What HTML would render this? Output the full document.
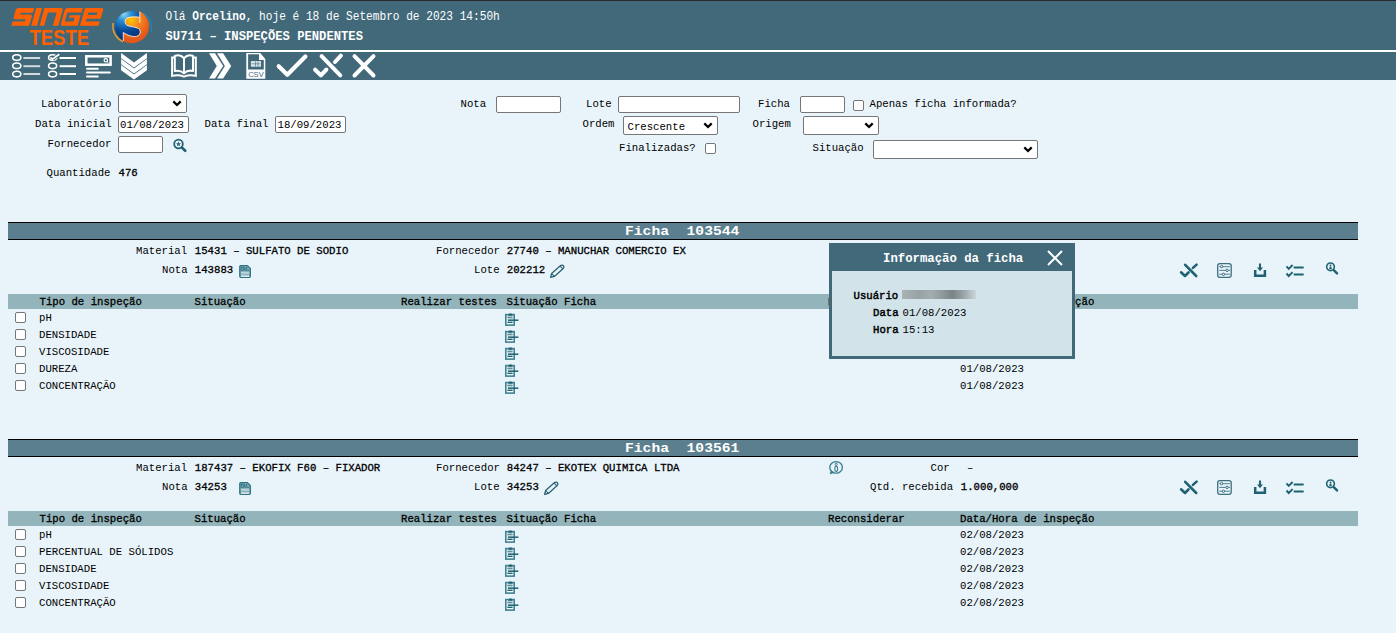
<!DOCTYPE html><html><head><meta charset="utf-8"><style>
*{margin:0;padding:0;box-sizing:border-box}
html,body{width:1396px;height:633px;overflow:hidden;background:#e8f4fa;font-family:"Liberation Mono",monospace;position:relative}
.a{position:absolute}
.t{position:absolute;line-height:20px;white-space:pre}
.inp{position:absolute;background:#fff;border:1px solid #767676;border-radius:2px}
.sel{position:absolute;background:#fff;border:1px solid #767676;border-radius:2px}
.chk{position:absolute;background:#fff;border:1px solid #767676;border-radius:2px}
</style></head><body>
<div class="a" style="left:0px;top:0px;width:1396px;height:1px;background:#2a2a30;"></div>
<div class="a" style="left:0px;top:1px;width:1396px;height:49px;background:#41697a;"></div>
<div class="a" style="left:0px;top:50px;width:1396px;height:2px;background:#ffffff;"></div>
<div class="a" style="left:0px;top:52px;width:1396px;height:28px;background:#41697a;"></div>
<svg class="a" style="left:0;top:0" width="110" height="50" viewBox="0 0 110 50"><path fill-rule="evenodd" transform="matrix(1 0 -0.28 1 7.24 0)" d="M11.3 10 Q11.3 7.9 13.5 7.9 L29.2 7.9 L29.2 12.8 L17 12.8 L17 14.6 L27.3 14.6 Q29.2 14.6 29.2 16.5 L29.2 24 Q29.2 25.86 27.3 25.86 L11.3 25.86 L11.3 21.4 L23.8 21.4 L23.8 19.25 L13.3 19.25 Q11.3 19.25 11.3 17.2 Z M31.2 7.9 L37 7.9 L37 25.86 L31.2 25.86 Z M39.5 7.9 L56 7.9 Q58.2 7.9 58.2 10.2 L58.2 25.86 L52.9 25.86 L52.9 12.6 L44.2 12.6 L44.2 25.86 L39.5 25.86 Z M62.6 7.9 L77.8 7.9 L77.8 12.4 L63.6 12.4 L63.6 21.6 L72.3 21.6 L72.3 17.8 L66.7 17.8 L66.7 15.2 L77.6 15.2 L77.6 25.86 L62.4 25.86 Q60.4 25.86 60.4 23.8 L60.4 10.1 Q60.4 7.9 62.6 7.9 Z M80 7.9 L96.4 7.9 Q98.7 7.9 98.7 10.2 L98.7 18.8 L84.5 18.8 L84.5 21.6 L98.5 21.6 L98.5 25.86 L80 25.86 Z M84.8 12.4 L84.8 15 L93.8 15 L93.8 12.4 Z" fill="#ff6100"/><text x="29.5" y="44.8" font-family="Liberation Sans" font-weight="bold" font-size="22" fill="#ff6100" textLength="59.5" lengthAdjust="spacingAndGlyphs">TESTE</text></svg>
<svg class="a" style="left:108px;top:6px" width="50" height="42" viewBox="0 0 50 42"><defs><radialGradient id="gb" gradientUnits="userSpaceOnUse" cx="16" cy="8" r="28"><stop offset="0" stop-color="#8fd4f4"/><stop offset="0.25" stop-color="#2a8fd6"/><stop offset="0.6" stop-color="#0b4a96"/><stop offset="1" stop-color="#05286a"/></radialGradient><radialGradient id="go" gradientUnits="userSpaceOnUse" cx="23" cy="14" r="20"><stop offset="0" stop-color="#ffc800"/><stop offset="0.4" stop-color="#f68a1e"/><stop offset="1" stop-color="#e4561a"/></radialGradient></defs><path d="M5 17 C4 25 8 32 15 36" fill="none" stroke="#f0a020" stroke-width="1.3"/><path d="M35.5 6.5 C41 10 44 17 43.5 26" fill="none" stroke="#1a88c8" stroke-width="1.3"/><ellipse cx="23.5" cy="20.8" rx="16.5" ry="15.8" fill="url(#gb)"/><path d="M31.8 5.3 L31.8 11.3 C27 10.6 21 10.6 18.5 12.3 C16.5 14 16.6 17.8 19 19.3 C22 20.8 27.5 20.8 30.5 22.5 C33 24 32.8 28 30 29.8 C27 31.3 21 30.5 15.3 26.5 L15.3 35.2 A16.5 15.8 0 1 0 31.8 5.3 Z" fill="url(#go)"/><path d="M31.8 5.6 L31.8 17 M31.8 11.3 C27 10.6 21 10.6 18.5 12.3 C16.5 14 16.6 17.8 19 19.3 C22 20.8 27.5 20.8 30.5 22.5 C33 24 32.8 28 30 29.8 C27 31.3 21 30.5 15.3 26.5 L15.3 35" fill="none" stroke="#fff" stroke-width="0.8"/></svg>
<div class="t" style="left:165.50px;top:7.03px;font-size:11.15px;transform:scaleY(1.2);transform-origin:0 12.97px;color:#fff;">Olá <b>Orcelino</b>, hoje é 18 de Setembro de 2023 14:50h</div>
<div class="t" style="left:165.50px;top:26.75px;font-size:12.2px;font-weight:bold;color:#fff;">SU711 – INSPEÇÕES PENDENTES</div>
<svg class="a" style="left:0px;top:48px" width="400" height="34" viewBox="0 48 400 34"><ellipse cx="16.8" cy="57.6" rx="4.05" ry="2.8" fill="none" stroke="#fff" stroke-width="1.55"/><rect x="23.4" y="57" width="16.7" height="2" fill="#d3dadd"/><ellipse cx="16.8" cy="65.8" rx="4.05" ry="2.8" fill="none" stroke="#fff" stroke-width="1.55"/><rect x="23.4" y="65.2" width="16.7" height="2" fill="#d3dadd"/><ellipse cx="16.8" cy="74.1" rx="4.05" ry="2.8" fill="none" stroke="#fff" stroke-width="1.55"/><rect x="23.4" y="73" width="16.7" height="2" fill="#d3dadd"/><ellipse cx="52.6" cy="57.6" rx="4.05" ry="2.8" fill="none" stroke="#fff" stroke-width="1.55"/><rect x="59.6" y="57" width="16.4" height="2" fill="#fff"/><ellipse cx="52.6" cy="65.8" rx="4.05" ry="2.8" fill="none" stroke="#fff" stroke-width="1.55"/><rect x="59.6" y="65.2" width="16.4" height="2" fill="#fff"/><ellipse cx="52.6" cy="74.1" rx="4.05" ry="2.8" fill="none" stroke="#fff" stroke-width="1.55"/><rect x="59.6" y="73" width="16.4" height="2" fill="#fff"/><path d="M52.6 59.2 L59.3 54.3" fill="none" stroke="#41697a" stroke-width="3.2"/><path d="M50.3 57.4 L52.5 59.2 L59.3 54.3" fill="none" stroke="#fff" stroke-width="1.7"/><rect x="86.3" y="56.3" width="24.3" height="8.4" fill="none" stroke="#fff" stroke-width="2.5"/><circle cx="105.8" cy="60.3" r="1.7" fill="none" stroke="#fff" stroke-width="1.2"/><path d="M107 61.5 L108.4 62.8" stroke="#fff" stroke-width="1"/><path d="M87 68.7 H97.8 M87 72.6 H109.8 M87 76.5 H97.8" stroke="#fff" stroke-width="2" stroke-linecap="round"/><path d="M121.1 53 L134 62.6 L146.9 53 L146.9 58.2 L134 67.6 L121.1 58.2 Z" fill="#fff"/><path d="M121.1 59 L134 68.6 L146.9 59 L146.9 64.2 L134 73.6 L121.1 64.2 Z" fill="#fff"/><path d="M121.1 65 L134 74.6 L146.9 65 L146.9 70.2 L134 79.6 L121.1 70.2 Z" fill="#fff"/><path d="M175 57.6 L172.1 57.6 L172.1 75.9 C176 75 180.5 75.2 184 76.6 C187.5 75.2 192 75 195.8 75.9 L195.8 57.6 L193 57.6" fill="none" stroke="#fff" stroke-width="2"/><path d="M174.8 71 L174.8 56 C178 54.6 181.6 55.4 184 58.2 C186.4 55.4 190 54.6 193 56 L193 71 C190 70.2 186.4 71 184 73.4 C181.6 71 178 70.2 174.8 71 Z M184 58.2 L184 73.4" fill="none" stroke="#fff" stroke-width="2" stroke-linejoin="round"/><path d="M209 53.3 L215 53.3 L223.2 65.9 L215 78.6 L209 78.6 L216.8 65.9 Z M217.1 53.3 L223.1 53.3 L231.2 65.9 L223.1 78.6 L217.1 78.6 L224.9 65.9 Z" fill="#fff"/><path d="M246.3 53 L260.2 53 L265.3 59.1 L265.3 78.8 L246.3 78.8 Z" fill="#fff"/><path d="M248.1 54.3 L259 54.3 L259 60.1 L263.8 60.1 L263.8 69.5 L248.1 69.5 Z" fill="#41697a"/><rect x="250.9" y="61.1" width="10.1" height="5.6" fill="#dfe6e9"/><path d="M251.5 63.8 H260.5 M255.5 61.5 V66.5 M258 61.5 V66.5" stroke="#41697a" stroke-width="0.6"/><text x="255.95" y="76.9" font-family="Liberation Sans" font-size="7.8" fill="#41697a" text-anchor="middle" textLength="15.6" lengthAdjust="spacingAndGlyphs">CSV</text><path d="M278.7 66.2 L287.3 74.8 L305.4 56.6" fill="none" stroke="#fff" stroke-width="4.2" stroke-linecap="round" stroke-linejoin="round"/><path d="M315.1 69.7 L320.9 75.3 L326.4 69.5 M321.6 56.1 L340.3 75.3 M340.9 55.6 L335 62" fill="none" stroke="#fff" stroke-width="4" stroke-linecap="round" stroke-linejoin="round"/><path d="M354.5 56.1 L373.5 75.5 M373.5 56.1 L354.5 75.5" fill="none" stroke="#fff" stroke-width="4" stroke-linecap="round"/></svg>
<div class="t" style="left:41.00px;top:94.16px;font-size:10.67px;color:#000;">Laboratório</div>
<div class="sel" style="left:118px;top:94px;width:69px;height:19px"><svg class="a" style="right:4.2px;top:5.0px" width="10" height="7" viewBox="0 0 10 7"><path d="M1.3 1.4 L5 5 L8.7 1.4" fill="none" stroke="#000" stroke-width="2.3"/></svg></div>
<div class="t" style="left:35.00px;top:114.16px;font-size:10.67px;color:#000;">Data inicial</div>
<div class="inp" style="left:118px;top:116px;width:71px;height:17px"></div>
<div class="t" style="left:120.00px;top:115.16px;font-size:10.67px;color:#000;color:#000">01/08/2023</div>
<div class="t" style="left:204.50px;top:114.16px;font-size:10.67px;color:#000;">Data final</div>
<div class="inp" style="left:275px;top:116px;width:71px;height:17px"></div>
<div class="t" style="left:277.50px;top:115.16px;font-size:10.67px;color:#000;">18/09/2023</div>
<div class="t" style="left:47.50px;top:134.16px;font-size:10.67px;color:#000;">Fornecedor</div>
<div class="inp" style="left:118px;top:136px;width:45px;height:17px"></div>
<svg class="a" style="left:172px;top:138px" width="16" height="16" viewBox="0 0 16 16"><circle cx="6.5" cy="6" r="4.3" fill="none" stroke="#1f6272" stroke-width="1.8"/><path d="M10 9.6 L13.2 12.8" stroke="#1f6272" stroke-width="2.7" stroke-linecap="round"/><path d="M6.5 3.6 L7.2 5.3 L9 5.3 L7.6 6.4 L8.1 8.2 L6.5 7.2 L4.9 8.2 L5.4 6.4 L4 5.3 L5.8 5.3Z" fill="#1f6272"/></svg>
<div class="t" style="left:46.50px;top:163.16px;font-size:10.67px;color:#000;">Quantidade</div>
<div class="t" style="left:118.50px;top:163.16px;font-size:10.67px;-webkit-text-stroke:0.3px #000;color:#000;">476</div>
<div class="t" style="left:460.50px;top:94.16px;font-size:10.67px;color:#000;">Nota</div>
<div class="inp" style="left:496px;top:96px;width:65px;height:17px"></div>
<div class="t" style="left:586.00px;top:94.16px;font-size:10.67px;color:#000;">Lote</div>
<div class="inp" style="left:618px;top:96px;width:122px;height:17px"></div>
<div class="t" style="left:758.00px;top:94.16px;font-size:10.67px;color:#000;">Ficha</div>
<div class="inp" style="left:800px;top:96px;width:45px;height:17px"></div>
<div class="chk" style="left:853px;top:100px;width:11px;height:11px"></div>
<div class="t" style="left:869.50px;top:94.16px;font-size:10.67px;color:#000;">Apenas ficha informada?</div>
<div class="t" style="left:582.50px;top:114.16px;font-size:10.67px;color:#000;">Ordem</div>
<div class="sel" style="left:623px;top:116px;width:95px;height:19px"><svg class="a" style="right:4.2px;top:5.0px" width="10" height="7" viewBox="0 0 10 7"><path d="M1.3 1.4 L5 5 L8.7 1.4" fill="none" stroke="#000" stroke-width="2.3"/></svg></div>
<div class="t" style="left:627.50px;top:117.16px;font-size:10.67px;color:#000;">Crescente</div>
<div class="t" style="left:752.50px;top:114.16px;font-size:10.67px;color:#000;">Origem</div>
<div class="sel" style="left:803px;top:116px;width:76px;height:19px"><svg class="a" style="right:4.2px;top:5.0px" width="10" height="7" viewBox="0 0 10 7"><path d="M1.3 1.4 L5 5 L8.7 1.4" fill="none" stroke="#000" stroke-width="2.3"/></svg></div>
<div class="t" style="left:619.00px;top:138.16px;font-size:10.67px;color:#000;">Finalizadas?</div>
<div class="chk" style="left:705px;top:143px;width:11px;height:11px"></div>
<div class="t" style="left:812.50px;top:138.16px;font-size:10.67px;color:#000;">Situação</div>
<div class="sel" style="left:873px;top:140px;width:165px;height:19px"><svg class="a" style="right:4.2px;top:5.0px" width="10" height="7" viewBox="0 0 10 7"><path d="M1.3 1.4 L5 5 L8.7 1.4" fill="none" stroke="#000" stroke-width="2.3"/></svg></div>
<div class="a" style="left:8px;top:222px;width:1350px;height:18px;background:#5b7f8e;border-top:1px solid #000;border-bottom:1px solid #000"></div>
<div class="t" style="left:625.00px;top:221.09px;font-size:14.67px;font-weight:bold;transform:scaleY(0.84);transform-origin:0 13.91px;color:#fff;">Ficha  103544</div>
<div class="t" style="left:136.00px;top:241.16px;font-size:10.67px;color:#000;">Material</div>
<div class="t" style="left:194.80px;top:241.16px;font-size:10.67px;-webkit-text-stroke:0.3px #000;color:#000;">15431 – SULFATO DE SODIO</div>
<div class="t" style="left:436.00px;top:241.16px;font-size:10.67px;color:#000;">Fornecedor</div>
<div class="t" style="left:506.80px;top:241.16px;font-size:10.67px;-webkit-text-stroke:0.3px #000;color:#000;">27740 – MANUCHAR COMERCIO EX</div>
<div class="t" style="left:162.00px;top:260.16px;font-size:10.67px;color:#000;">Nota</div>
<div class="t" style="left:194.80px;top:260.16px;font-size:10.67px;-webkit-text-stroke:0.3px #000;color:#000;">143883</div>
<svg class="a" style="left:236px;top:262px" width="18" height="18" viewBox="236 262 18 18"><path d="M239.8 266.5 Q239.8 265.6 240.8 265.6 L247.3 265.6 L250.3 268.5 L250.3 276.3 Q250.3 277.3 249.3 277.3 L240.8 277.3 Q239.8 277.3 239.8 276.3 Z" fill="#8db3bd" stroke="#2d7081" stroke-width="1.3"/><rect x="241.2" y="267.2" width="2.1" height="3.1" fill="none" stroke="#2d6f80" stroke-width="0.9"/><path d="M244.7 267 V270.2 H249" fill="none" stroke="#2d6f80" stroke-width="1"/><rect x="246" y="267" width="1.2" height="2.2" fill="#2d6f80"/><rect x="241" y="272" width="8.2" height="1.7" fill="#bcd5db"/><rect x="241" y="275.6" width="8.2" height="1.2" fill="#f4fafb"/></svg>
<div class="t" style="left:474.00px;top:260.16px;font-size:10.67px;color:#000;">Lote</div>
<div class="t" style="left:506.80px;top:260.16px;font-size:10.67px;-webkit-text-stroke:0.3px #000;color:#000;">202212</div>
<svg class="a" style="left:546.0px;top:262px" width="22" height="18" viewBox="546 262 22 18"><path d="M550.6 277.4 L551.6 273.6 L560.6 265.6 Q562.3 264.5 563.5 265.8 Q564.5 267.2 563.2 268.6 L554.4 276.4 Z" fill="none" stroke="#2a6373" stroke-width="1.3" stroke-linejoin="round"/><path d="M551.6 273.6 L554.4 276.4 M560.2 266.2 L562.8 268.8" stroke="#2a6373" stroke-width="1.1"/></svg>
<div class="t" style="left:930.50px;top:241.16px;font-size:10.67px;color:#000;">Cor</div>
<div class="t" style="left:967.00px;top:241.16px;font-size:10.67px;color:#000;">–</div>
<div class="t" style="left:870.00px;top:260.16px;font-size:10.67px;color:#000;">Qtd. recebida</div>
<div class="t" style="left:960.80px;top:260.16px;font-size:10.67px;-webkit-text-stroke:0.3px #000;color:#000;">1.000,000</div>
<svg class="a" style="left:1170px;top:255px" width="180" height="28" viewBox="1170 255 180 28"><path d="M1181.05 272.3 L1185 276 L1188.5 272.5 M1185.2 264.8 L1196.2 276 M1196.6 264.6 L1192.9 267.9" fill="none" stroke="#1f6272" stroke-width="2.6" stroke-linecap="round" stroke-linejoin="round"/><rect x="1217.7" y="263.6" width="13.5" height="13.7" rx="2.2" fill="none" stroke="#3d6f7f" stroke-width="1.3"/><path d="M1219.3 266.7 H1229.9 M1219.3 270.4 H1229.9 M1219.3 274.2 H1229.9" stroke="#3d6f7f" stroke-width="0.9"/><circle cx="1221.6" cy="266.6" r="1.2" fill="#e8f4fa" stroke="#3d6f7f" stroke-width="1"/><circle cx="1227.1" cy="270.4" r="1.2" fill="#e8f4fa" stroke="#3d6f7f" stroke-width="1"/><circle cx="1223.4" cy="274.3" r="1.2" fill="#e8f4fa" stroke="#3d6f7f" stroke-width="1"/><path d="M1255.2 270 V275.8 H1264.9 V270" fill="none" stroke="#1f6272" stroke-width="2.5"/><path d="M1260 263.5 V268.5" stroke="#1f6272" stroke-width="2.1"/><path d="M1257 267.6 L1263 267.6 L1260 271.2 Z" fill="#1f6272"/><path d="M1286.5 266.4 L1288.7 268.9 L1292.6 265 M1286.5 273.5 L1288.7 276 L1292.6 272.1" fill="none" stroke="#1f6272" stroke-width="1.9"/><path d="M1293.7 267.5 H1303.7 M1293.7 274.6 H1303.7" stroke="#1f6272" stroke-width="2"/><circle cx="1330.5" cy="266.8" r="3.85" fill="none" stroke="#1f6272" stroke-width="1.6"/><path d="M1334 270.4 L1337 273.3" stroke="#1f6272" stroke-width="2.5" stroke-linecap="round"/><circle cx="1330.5" cy="265.5" r="0.95" fill="#1f6272"/><path d="M1329.1 269 L1329.7 266.7 H1331.3 L1331.9 269 Z" fill="#1f6272"/></svg>
<div class="a" style="left:8px;top:294px;width:1350px;height:15px;background:#93b4ba;"></div>
<div class="t" style="left:39.50px;top:292.16px;font-size:10.67px;-webkit-text-stroke:0.3px #000;color:#000;">Tipo de inspeção</div>
<div class="t" style="left:194.50px;top:292.16px;font-size:10.67px;-webkit-text-stroke:0.3px #000;color:#000;">Situação</div>
<div class="t" style="left:401.00px;top:292.16px;font-size:10.67px;-webkit-text-stroke:0.3px #000;color:#000;">Realizar testes</div>
<div class="t" style="left:506.50px;top:292.16px;font-size:10.67px;-webkit-text-stroke:0.3px #000;color:#000;">Situação Ficha</div>
<div class="t" style="left:828.00px;top:292.16px;font-size:10.67px;-webkit-text-stroke:0.3px #000;color:#000;">Reconsiderar</div>
<div class="t" style="left:960.00px;top:292.16px;font-size:10.67px;-webkit-text-stroke:0.3px #000;color:#000;">Data/Hora de inspeção</div>
<div class="chk" style="left:15px;top:312px;width:11px;height:11px"></div>
<div class="t" style="left:39.00px;top:308.16px;font-size:10.67px;color:#000;">pH</div>
<svg class="a" style="left:502px;top:310px" width="20" height="18" viewBox="502 310 20 18"><rect x="505.8" y="314.6" width="8.4" height="10.5" fill="#f4f9fb" stroke="#3f8292" stroke-width="1.6"/><path d="M508 315.8 L509.3 313.4 L511.5 313.4 L512.8 315.8 Z" fill="#1f6272"/><path d="M507.4 317.2 H512.6 M507.4 322.5 H512.6" stroke="#1f6272" stroke-width="1"/><path d="M507.4 318.9 H512.6 M507.4 321.4 H512.6" stroke="#7fa9b4" stroke-width="0.8"/><path d="M508 320.2 H518.4" stroke="#1f6272" stroke-width="1.5"/></svg>
<div class="t" style="left:960.00px;top:308.16px;font-size:10.67px;color:#000;">01/08/2023</div>
<div class="chk" style="left:15px;top:329px;width:11px;height:11px"></div>
<div class="t" style="left:39.00px;top:325.16px;font-size:10.67px;color:#000;">DENSIDADE</div>
<svg class="a" style="left:502px;top:327px" width="20" height="18" viewBox="502 310 20 18"><rect x="505.8" y="314.6" width="8.4" height="10.5" fill="#f4f9fb" stroke="#3f8292" stroke-width="1.6"/><path d="M508 315.8 L509.3 313.4 L511.5 313.4 L512.8 315.8 Z" fill="#1f6272"/><path d="M507.4 317.2 H512.6 M507.4 322.5 H512.6" stroke="#1f6272" stroke-width="1"/><path d="M507.4 318.9 H512.6 M507.4 321.4 H512.6" stroke="#7fa9b4" stroke-width="0.8"/><path d="M508 320.2 H518.4" stroke="#1f6272" stroke-width="1.5"/></svg>
<div class="t" style="left:960.00px;top:325.16px;font-size:10.67px;color:#000;">01/08/2023</div>
<div class="chk" style="left:15px;top:346px;width:11px;height:11px"></div>
<div class="t" style="left:39.00px;top:342.16px;font-size:10.67px;color:#000;">VISCOSIDADE</div>
<svg class="a" style="left:502px;top:344px" width="20" height="18" viewBox="502 310 20 18"><rect x="505.8" y="314.6" width="8.4" height="10.5" fill="#f4f9fb" stroke="#3f8292" stroke-width="1.6"/><path d="M508 315.8 L509.3 313.4 L511.5 313.4 L512.8 315.8 Z" fill="#1f6272"/><path d="M507.4 317.2 H512.6 M507.4 322.5 H512.6" stroke="#1f6272" stroke-width="1"/><path d="M507.4 318.9 H512.6 M507.4 321.4 H512.6" stroke="#7fa9b4" stroke-width="0.8"/><path d="M508 320.2 H518.4" stroke="#1f6272" stroke-width="1.5"/></svg>
<div class="t" style="left:960.00px;top:342.16px;font-size:10.67px;color:#000;">01/08/2023</div>
<div class="chk" style="left:15px;top:363px;width:11px;height:11px"></div>
<div class="t" style="left:39.00px;top:359.16px;font-size:10.67px;color:#000;">DUREZA</div>
<svg class="a" style="left:502px;top:361px" width="20" height="18" viewBox="502 310 20 18"><rect x="505.8" y="314.6" width="8.4" height="10.5" fill="#f4f9fb" stroke="#3f8292" stroke-width="1.6"/><path d="M508 315.8 L509.3 313.4 L511.5 313.4 L512.8 315.8 Z" fill="#1f6272"/><path d="M507.4 317.2 H512.6 M507.4 322.5 H512.6" stroke="#1f6272" stroke-width="1"/><path d="M507.4 318.9 H512.6 M507.4 321.4 H512.6" stroke="#7fa9b4" stroke-width="0.8"/><path d="M508 320.2 H518.4" stroke="#1f6272" stroke-width="1.5"/></svg>
<div class="t" style="left:960.00px;top:359.16px;font-size:10.67px;color:#000;">01/08/2023</div>
<div class="chk" style="left:15px;top:380px;width:11px;height:11px"></div>
<div class="t" style="left:39.00px;top:376.16px;font-size:10.67px;color:#000;">CONCENTRAÇÃO</div>
<svg class="a" style="left:502px;top:378px" width="20" height="18" viewBox="502 310 20 18"><rect x="505.8" y="314.6" width="8.4" height="10.5" fill="#f4f9fb" stroke="#3f8292" stroke-width="1.6"/><path d="M508 315.8 L509.3 313.4 L511.5 313.4 L512.8 315.8 Z" fill="#1f6272"/><path d="M507.4 317.2 H512.6 M507.4 322.5 H512.6" stroke="#1f6272" stroke-width="1"/><path d="M507.4 318.9 H512.6 M507.4 321.4 H512.6" stroke="#7fa9b4" stroke-width="0.8"/><path d="M508 320.2 H518.4" stroke="#1f6272" stroke-width="1.5"/></svg>
<div class="t" style="left:960.00px;top:376.16px;font-size:10.67px;color:#000;">01/08/2023</div>
<div class="a" style="left:8px;top:439px;width:1350px;height:18px;background:#5b7f8e;border-top:1px solid #000;border-bottom:1px solid #000"></div>
<div class="t" style="left:625.00px;top:438.09px;font-size:14.67px;font-weight:bold;transform:scaleY(0.84);transform-origin:0 13.91px;color:#fff;">Ficha  103561</div>
<div class="t" style="left:136.00px;top:458.16px;font-size:10.67px;color:#000;">Material</div>
<div class="t" style="left:194.80px;top:458.16px;font-size:10.67px;-webkit-text-stroke:0.3px #000;color:#000;">187437 – EKOFIX F60 – FIXADOR</div>
<div class="t" style="left:436.00px;top:458.16px;font-size:10.67px;color:#000;">Fornecedor</div>
<div class="t" style="left:506.80px;top:458.16px;font-size:10.67px;-webkit-text-stroke:0.3px #000;color:#000;">84247 – EKOTEX QUIMICA LTDA</div>
<div class="t" style="left:162.00px;top:477.16px;font-size:10.67px;color:#000;">Nota</div>
<div class="t" style="left:194.80px;top:477.16px;font-size:10.67px;-webkit-text-stroke:0.3px #000;color:#000;">34253</div>
<svg class="a" style="left:236px;top:479px" width="18" height="18" viewBox="236 262 18 18"><path d="M239.8 266.5 Q239.8 265.6 240.8 265.6 L247.3 265.6 L250.3 268.5 L250.3 276.3 Q250.3 277.3 249.3 277.3 L240.8 277.3 Q239.8 277.3 239.8 276.3 Z" fill="#8db3bd" stroke="#2d7081" stroke-width="1.3"/><rect x="241.2" y="267.2" width="2.1" height="3.1" fill="none" stroke="#2d6f80" stroke-width="0.9"/><path d="M244.7 267 V270.2 H249" fill="none" stroke="#2d6f80" stroke-width="1"/><rect x="246" y="267" width="1.2" height="2.2" fill="#2d6f80"/><rect x="241" y="272" width="8.2" height="1.7" fill="#bcd5db"/><rect x="241" y="275.6" width="8.2" height="1.2" fill="#f4fafb"/></svg>
<div class="t" style="left:474.00px;top:477.16px;font-size:10.67px;color:#000;">Lote</div>
<div class="t" style="left:506.80px;top:477.16px;font-size:10.67px;-webkit-text-stroke:0.3px #000;color:#000;">34253</div>
<svg class="a" style="left:539.6px;top:479px" width="22" height="18" viewBox="546 262 22 18"><path d="M550.6 277.4 L551.6 273.6 L560.6 265.6 Q562.3 264.5 563.5 265.8 Q564.5 267.2 563.2 268.6 L554.4 276.4 Z" fill="none" stroke="#2a6373" stroke-width="1.3" stroke-linejoin="round"/><path d="M551.6 273.6 L554.4 276.4 M560.2 266.2 L562.8 268.8" stroke="#2a6373" stroke-width="1.1"/></svg>
<svg class="a" style="left:826px;top:458px" width="20" height="20" viewBox="826 458 20 20"><ellipse cx="836.1" cy="467.4" rx="6.3" ry="5.8" fill="none" stroke="#3a7d8d" stroke-width="1.3"/><path d="M831.2 470.6 L830 474 L834 472.6 Z" fill="#3a7d8d" stroke="#3a7d8d" stroke-width="0.6" stroke-linejoin="round"/><circle cx="836.2" cy="464.4" r="1.1" fill="none" stroke="#3a7d8d" stroke-width="1"/><rect x="834.9" y="466.4" width="2.6" height="5" rx="1.2" fill="none" stroke="#3a7d8d" stroke-width="1.1"/></svg>
<div class="t" style="left:930.50px;top:458.16px;font-size:10.67px;color:#000;">Cor</div>
<div class="t" style="left:967.00px;top:458.16px;font-size:10.67px;color:#000;">–</div>
<div class="t" style="left:870.00px;top:477.16px;font-size:10.67px;color:#000;">Qtd. recebida</div>
<div class="t" style="left:960.80px;top:477.16px;font-size:10.67px;-webkit-text-stroke:0.3px #000;color:#000;">1.000,000</div>
<svg class="a" style="left:1170px;top:472px" width="180" height="28" viewBox="1170 255 180 28"><path d="M1181.05 272.3 L1185 276 L1188.5 272.5 M1185.2 264.8 L1196.2 276 M1196.6 264.6 L1192.9 267.9" fill="none" stroke="#1f6272" stroke-width="2.6" stroke-linecap="round" stroke-linejoin="round"/><rect x="1217.7" y="263.6" width="13.5" height="13.7" rx="2.2" fill="none" stroke="#3d6f7f" stroke-width="1.3"/><path d="M1219.3 266.7 H1229.9 M1219.3 270.4 H1229.9 M1219.3 274.2 H1229.9" stroke="#3d6f7f" stroke-width="0.9"/><circle cx="1221.6" cy="266.6" r="1.2" fill="#e8f4fa" stroke="#3d6f7f" stroke-width="1"/><circle cx="1227.1" cy="270.4" r="1.2" fill="#e8f4fa" stroke="#3d6f7f" stroke-width="1"/><circle cx="1223.4" cy="274.3" r="1.2" fill="#e8f4fa" stroke="#3d6f7f" stroke-width="1"/><path d="M1255.2 270 V275.8 H1264.9 V270" fill="none" stroke="#1f6272" stroke-width="2.5"/><path d="M1260 263.5 V268.5" stroke="#1f6272" stroke-width="2.1"/><path d="M1257 267.6 L1263 267.6 L1260 271.2 Z" fill="#1f6272"/><path d="M1286.5 266.4 L1288.7 268.9 L1292.6 265 M1286.5 273.5 L1288.7 276 L1292.6 272.1" fill="none" stroke="#1f6272" stroke-width="1.9"/><path d="M1293.7 267.5 H1303.7 M1293.7 274.6 H1303.7" stroke="#1f6272" stroke-width="2"/><circle cx="1330.5" cy="266.8" r="3.85" fill="none" stroke="#1f6272" stroke-width="1.6"/><path d="M1334 270.4 L1337 273.3" stroke="#1f6272" stroke-width="2.5" stroke-linecap="round"/><circle cx="1330.5" cy="265.5" r="0.95" fill="#1f6272"/><path d="M1329.1 269 L1329.7 266.7 H1331.3 L1331.9 269 Z" fill="#1f6272"/></svg>
<div class="a" style="left:8px;top:511px;width:1350px;height:15px;background:#93b4ba;"></div>
<div class="t" style="left:39.50px;top:509.16px;font-size:10.67px;-webkit-text-stroke:0.3px #000;color:#000;">Tipo de inspeção</div>
<div class="t" style="left:194.50px;top:509.16px;font-size:10.67px;-webkit-text-stroke:0.3px #000;color:#000;">Situação</div>
<div class="t" style="left:401.00px;top:509.16px;font-size:10.67px;-webkit-text-stroke:0.3px #000;color:#000;">Realizar testes</div>
<div class="t" style="left:506.50px;top:509.16px;font-size:10.67px;-webkit-text-stroke:0.3px #000;color:#000;">Situação Ficha</div>
<div class="t" style="left:828.00px;top:509.16px;font-size:10.67px;-webkit-text-stroke:0.3px #000;color:#000;">Reconsiderar</div>
<div class="t" style="left:960.00px;top:509.16px;font-size:10.67px;-webkit-text-stroke:0.3px #000;color:#000;">Data/Hora de inspeção</div>
<div class="chk" style="left:15px;top:529px;width:11px;height:11px"></div>
<div class="t" style="left:39.00px;top:525.16px;font-size:10.67px;color:#000;">pH</div>
<svg class="a" style="left:502px;top:527px" width="20" height="18" viewBox="502 310 20 18"><rect x="505.8" y="314.6" width="8.4" height="10.5" fill="#f4f9fb" stroke="#3f8292" stroke-width="1.6"/><path d="M508 315.8 L509.3 313.4 L511.5 313.4 L512.8 315.8 Z" fill="#1f6272"/><path d="M507.4 317.2 H512.6 M507.4 322.5 H512.6" stroke="#1f6272" stroke-width="1"/><path d="M507.4 318.9 H512.6 M507.4 321.4 H512.6" stroke="#7fa9b4" stroke-width="0.8"/><path d="M508 320.2 H518.4" stroke="#1f6272" stroke-width="1.5"/></svg>
<div class="t" style="left:960.00px;top:525.16px;font-size:10.67px;color:#000;">02/08/2023</div>
<div class="chk" style="left:15px;top:546px;width:11px;height:11px"></div>
<div class="t" style="left:39.00px;top:542.16px;font-size:10.67px;color:#000;">PERCENTUAL DE SÓLIDOS</div>
<svg class="a" style="left:502px;top:544px" width="20" height="18" viewBox="502 310 20 18"><rect x="505.8" y="314.6" width="8.4" height="10.5" fill="#f4f9fb" stroke="#3f8292" stroke-width="1.6"/><path d="M508 315.8 L509.3 313.4 L511.5 313.4 L512.8 315.8 Z" fill="#1f6272"/><path d="M507.4 317.2 H512.6 M507.4 322.5 H512.6" stroke="#1f6272" stroke-width="1"/><path d="M507.4 318.9 H512.6 M507.4 321.4 H512.6" stroke="#7fa9b4" stroke-width="0.8"/><path d="M508 320.2 H518.4" stroke="#1f6272" stroke-width="1.5"/></svg>
<div class="t" style="left:960.00px;top:542.16px;font-size:10.67px;color:#000;">02/08/2023</div>
<div class="chk" style="left:15px;top:563px;width:11px;height:11px"></div>
<div class="t" style="left:39.00px;top:559.16px;font-size:10.67px;color:#000;">DENSIDADE</div>
<svg class="a" style="left:502px;top:561px" width="20" height="18" viewBox="502 310 20 18"><rect x="505.8" y="314.6" width="8.4" height="10.5" fill="#f4f9fb" stroke="#3f8292" stroke-width="1.6"/><path d="M508 315.8 L509.3 313.4 L511.5 313.4 L512.8 315.8 Z" fill="#1f6272"/><path d="M507.4 317.2 H512.6 M507.4 322.5 H512.6" stroke="#1f6272" stroke-width="1"/><path d="M507.4 318.9 H512.6 M507.4 321.4 H512.6" stroke="#7fa9b4" stroke-width="0.8"/><path d="M508 320.2 H518.4" stroke="#1f6272" stroke-width="1.5"/></svg>
<div class="t" style="left:960.00px;top:559.16px;font-size:10.67px;color:#000;">02/08/2023</div>
<div class="chk" style="left:15px;top:580px;width:11px;height:11px"></div>
<div class="t" style="left:39.00px;top:576.16px;font-size:10.67px;color:#000;">VISCOSIDADE</div>
<svg class="a" style="left:502px;top:578px" width="20" height="18" viewBox="502 310 20 18"><rect x="505.8" y="314.6" width="8.4" height="10.5" fill="#f4f9fb" stroke="#3f8292" stroke-width="1.6"/><path d="M508 315.8 L509.3 313.4 L511.5 313.4 L512.8 315.8 Z" fill="#1f6272"/><path d="M507.4 317.2 H512.6 M507.4 322.5 H512.6" stroke="#1f6272" stroke-width="1"/><path d="M507.4 318.9 H512.6 M507.4 321.4 H512.6" stroke="#7fa9b4" stroke-width="0.8"/><path d="M508 320.2 H518.4" stroke="#1f6272" stroke-width="1.5"/></svg>
<div class="t" style="left:960.00px;top:576.16px;font-size:10.67px;color:#000;">02/08/2023</div>
<div class="chk" style="left:15px;top:597px;width:11px;height:11px"></div>
<div class="t" style="left:39.00px;top:593.16px;font-size:10.67px;color:#000;">CONCENTRAÇÃO</div>
<svg class="a" style="left:502px;top:595px" width="20" height="18" viewBox="502 310 20 18"><rect x="505.8" y="314.6" width="8.4" height="10.5" fill="#f4f9fb" stroke="#3f8292" stroke-width="1.6"/><path d="M508 315.8 L509.3 313.4 L511.5 313.4 L512.8 315.8 Z" fill="#1f6272"/><path d="M507.4 317.2 H512.6 M507.4 322.5 H512.6" stroke="#1f6272" stroke-width="1"/><path d="M507.4 318.9 H512.6 M507.4 321.4 H512.6" stroke="#7fa9b4" stroke-width="0.8"/><path d="M508 320.2 H518.4" stroke="#1f6272" stroke-width="1.5"/></svg>
<div class="t" style="left:960.00px;top:593.16px;font-size:10.67px;color:#000;">02/08/2023</div>
<div class="a" style="left:829px;top:243px;width:246px;height:116px;background:#41697a;"></div>
<div class="a" style="left:832px;top:271px;width:240px;height:85px;background:#d2e3ea;"></div>
<div class="t" style="left:883.00px;top:248.72px;font-size:12.3px;font-weight:bold;color:#fff;">Informação da ficha</div>
<svg class="a" style="left:1046px;top:249px" width="18" height="18" viewBox="0 0 18 18"><path d="M2 2 L16 16 M16 2 L2 16" stroke="#fff" stroke-width="2"/></svg>
<div class="t" style="left:853.50px;top:286.16px;font-size:10.67px;-webkit-text-stroke:0.3px #000;color:#000;-webkit-text-stroke:0.45px #000">Usuário</div>
<div class="a" style="left:902px;top:290px;width:74px;height:9px;background:linear-gradient(90deg,#aab4b7 0%,#98a2a5 22%,#a3adb0 40%,#8f999c 55%,#7a8387 68%,#98a1a4 82%,#c9d6db 100%)"></div>
<div class="t" style="left:873.00px;top:303.16px;font-size:10.67px;-webkit-text-stroke:0.3px #000;color:#000;-webkit-text-stroke:0.45px #000">Data</div>
<div class="t" style="left:902.50px;top:303.16px;font-size:10.67px;color:#000;">01/08/2023</div>
<div class="t" style="left:873.00px;top:320.16px;font-size:10.67px;-webkit-text-stroke:0.3px #000;color:#000;-webkit-text-stroke:0.45px #000">Hora</div>
<div class="t" style="left:902.50px;top:320.16px;font-size:10.67px;color:#000;">15:13</div>
</body></html>
